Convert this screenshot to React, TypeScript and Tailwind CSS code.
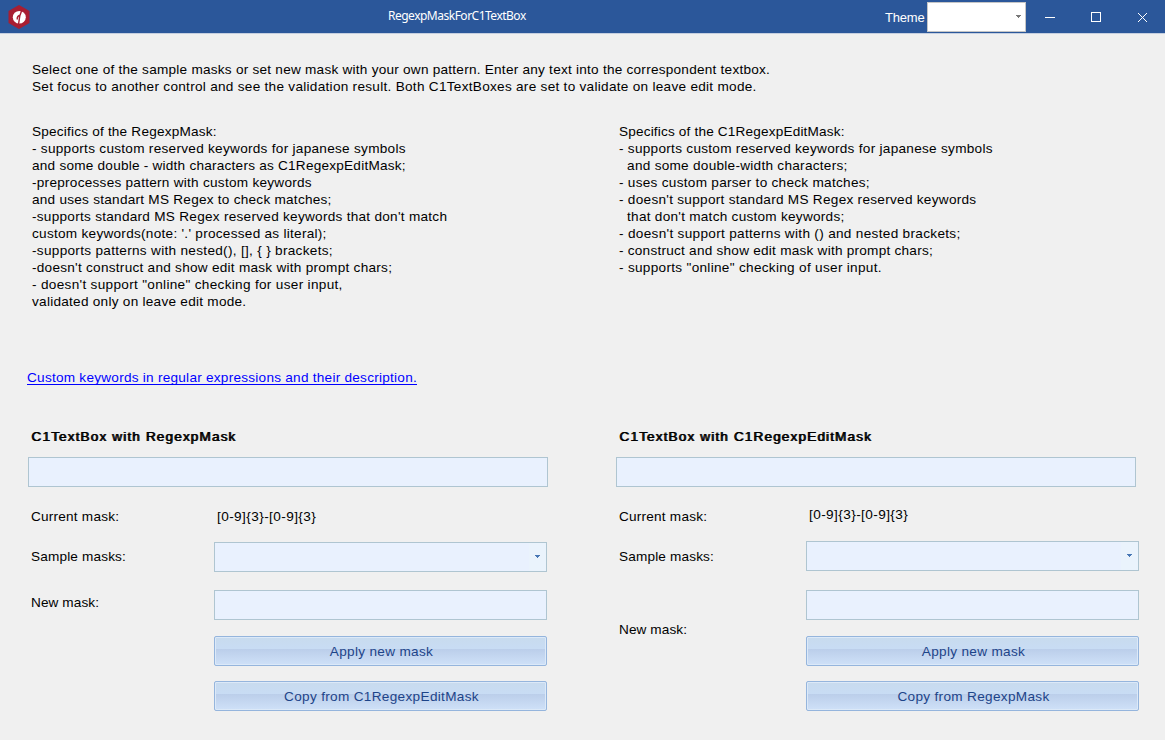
import React from 'react';

type Line = [text: string, tracking: string];

const intro: Line[] = [
  ['Select one of the sample masks or set new mask with your own pattern. Enter any text into the correspondent textbox.', 'tracking-[0.24px]'],
  ['Set focus to another control and see the validation result. Both C1TextBoxes are set to validate on leave edit mode.', 'tracking-[0.28px]'],
];

const regexpMask: Line[] = [
  ['Specifics of the RegexpMask:', 'tracking-[0.2px]'],
  ['- supports custom reserved keywords for japanese symbols', 'tracking-[0.28px]'],
  ['and some double - width characters as C1RegexpEditMask;', 'tracking-[0.23px]'],
  ['-preprocesses pattern with custom keywords', 'tracking-[0.26px]'],
  ['and uses standart MS Regex to check matches;', 'tracking-[0.25px]'],
  ["-supports standard MS Regex reserved keywords that don't match", 'tracking-[0.27px]'],
  ["custom keywords(note: '.' processed as literal);", 'tracking-[0.27px]'],
  ['-supports patterns with nested(), [], { } brackets;', 'tracking-[0.3px]'],
  ["-doesn't construct and show edit mask with prompt chars;", 'tracking-[0.26px]'],
  ['- doesn\'t support "online" checking for user input,', 'tracking-[0.31px]'],
  ['validated only on leave edit mode.', 'tracking-[0.26px]'],
];

const editMask: Line[] = [
  ['Specifics of the C1RegexpEditMask:', 'tracking-[0.17px]'],
  ['- supports custom reserved keywords for japanese symbols', 'tracking-[0.28px]'],
  ['  and some double-width characters;', 'tracking-[0.27px]'],
  ['- uses custom parser to check matches;', 'tracking-[0.28px]'],
  ["- doesn't support standard MS Regex reserved keywords", 'tracking-[0.28px]'],
  ["  that don't match custom keywords;", 'tracking-[0.26px]'],
  ["- doesn't support patterns with () and nested brackets;", 'tracking-[0.31px]'],
  ['- construct and show edit mask with prompt chars;', 'tracking-[0.24px]'],
  ['- supports "online" checking of user input.', 'tracking-[0.3px]'],
];

function Lines({ lines }: { lines: Line[] }) {
  return (
    <div>
      {lines.map(([text, tracking]) => (
        <p key={text} className={`h-[17px] whitespace-pre ${tracking}`}>{text}</p>
      ))}
    </div>
  );
}

function Arrow({ className }: { className: string }) {
  return (
    <svg width="5" height="3" viewBox="0 0 5 3" className={className} shapeRendering="crispEdges">
      <path d="M0 0h5v1H4v1H3v1H2V2H1V1H0z" fill="currentColor" />
    </svg>
  );
}

function Heading({ children }: { children: string }) {
  return (
    <h2 className="h-[30px] pt-px pl-[3px] tracking-[1.13px] [text-shadow:1px_0_0_#000]">{children}</h2>
  );
}

function Field({ className }: { className: string }) {
  return <div className={`h-[30px] border border-[#afc5d1] bg-[#e9f1fe] ${className}`} />;
}

function Combo({ className }: { className: string }) {
  return (
    <div className={`flex h-[30px] w-[333px] justify-end border border-[#afc5d1] bg-[#e9f1fe] ${className}`}>
      <div className="w-[17px] bg-[#eaf3fc] pt-[12px] pl-[6px]">
        <Arrow className="text-[#4776b4]" />
      </div>
    </div>
  );
}

function Button({ label, className }: { label: string; className: string }) {
  return (
    <button
      className={`block h-[30px] w-[333px] rounded-[2px] border border-[#95b5dd] bg-[linear-gradient(#c8dbee_0%,#c8dcf4_42%,#bbceea_43%,#cfe1f8_100%)] pl-[2px] text-center leading-[30px] tracking-[0.32px] text-[#1d4489] shadow-[inset_0_0_0_1px_#dce9f8] ${className}`}
    >
      {label}
    </button>
  );
}

export default function App() {
  return (
    <div className="h-[740px] w-[1165px] overflow-hidden bg-[#f0f0f0] font-['Liberation_Sans',sans-serif] text-[13.6px] leading-[17px] text-black">
      <header className="flex h-[34px] border-b border-[#c5cfe0] bg-[#2b579a] text-white">
        <svg width="24" height="26" viewBox="0 0 24 26" className="mt-[4px] ml-[7px]">
          <path d="M12 1 22.500 7v12L12 25 1.500 19V7z" fill="#a81e32" />
          <ellipse cx="12.300" cy="13.200" rx="6.500" ry="6.300" fill="#fff" />
          <path d="M15 5.500 12.800 12 11.500 20.500M13.500 11c-2 .5-3.500 2-3.300 4.500" fill="none" stroke="#a81e32" strokeWidth="1.400" />
        </svg>
        <div className="w-[357px] shrink-0" />
        <h1 className="w-[497px] shrink-0 pt-[7px] font-['Noto_Sans',sans-serif] text-[12px] tracking-[-0.5px]">RegexpMaskForC1TextBox</h1>
        <span className="w-[42px] shrink-0 pt-[9px] text-[13px] tracking-[-0.2px]">Theme</span>
        <div className="mt-[2px] h-[30px] w-[99px] shrink-0 border border-[#c6c6c6] bg-white pt-[12px] pl-[88px]">
          <Arrow className="text-[#777777]" />
        </div>
        <svg width="139" height="33" viewBox="0 0 139 33" className="shrink-0" fill="none" stroke="#fff" shapeRendering="crispEdges">
          <path d="M19 17.500h10M65.500 12.500h9v9h-9z" />
          <path d="m112 13 9 9m0-9-9 9" shapeRendering="auto" />
        </svg>
      </header>

      <main>
        <div className="pt-[27px] pl-[32px]">
          <Lines lines={intro} />
        </div>
        <section className="flex h-[246px] pt-[28px] pl-[32px]">
          <div className="w-[587px]"><Lines lines={regexpMask} /></div>
          <Lines lines={editMask} />
        </section>
        <div className="h-[86px] pt-[28px] pl-[27px]">
          <a href="#keywords" className="block h-[16px] w-[390px] border-b border-current leading-[17px] tracking-[0.25px] whitespace-nowrap text-[#0000ff]">
            Custom keywords in regular expressions and their description.
          </a>
        </div>
        <div className="flex">
          <section className="w-[588px] pl-[28px]">
            <Heading>C1TextBox with RegexpMask</Heading>
            <Field className="w-[520px]" />
            <div className="flex pl-[3px]">
              <div className="w-[183px]">
                <p className="mt-[21px] tracking-[0.22px]">Current mask:</p>
                <p className="mt-[23px] tracking-[0.16px]">Sample masks:</p>
                <p className="mt-[29px] tracking-[0.1px]">New mask:</p>
              </div>
              <div>
                <p className="mt-[21px] pl-[3px] tracking-[0.41px]">[0-9]{'{3}'}-[0-9]{'{3}'}</p>
                <Combo className="mt-[17px]" />
                <Field className="mt-[18px] w-[333px]" />
                <Button className="mt-[16px]" label="Apply new mask" />
                <Button className="mt-[15px]" label="Copy from C1RegexpEditMask" />
              </div>
            </div>
          </section>
          <section className="pl-[28px]">
            <Heading>C1TextBox with C1RegexpEditMask</Heading>
            <Field className="w-[520px]" />
            <div className="flex pl-[3px]">
              <div className="w-[187px]">
                <p className="mt-[21px] tracking-[0.22px]">Current mask:</p>
                <p className="mt-[23px] tracking-[0.16px]">Sample masks:</p>
                <p className="mt-[56px] tracking-[0.1px]">New mask:</p>
              </div>
              <div>
                <p className="mt-[19px] pl-[3px] tracking-[0.41px]">[0-9]{'{3}'}-[0-9]{'{3}'}</p>
                <Combo className="mt-[18px]" />
                <Field className="mt-[19px] w-[333px]" />
                <Button className="mt-[16px]" label="Apply new mask" />
                <Button className="mt-[15px]" label="Copy from RegexpMask" />
              </div>
            </div>
          </section>
        </div>
      </main>
    </div>
  );
}
